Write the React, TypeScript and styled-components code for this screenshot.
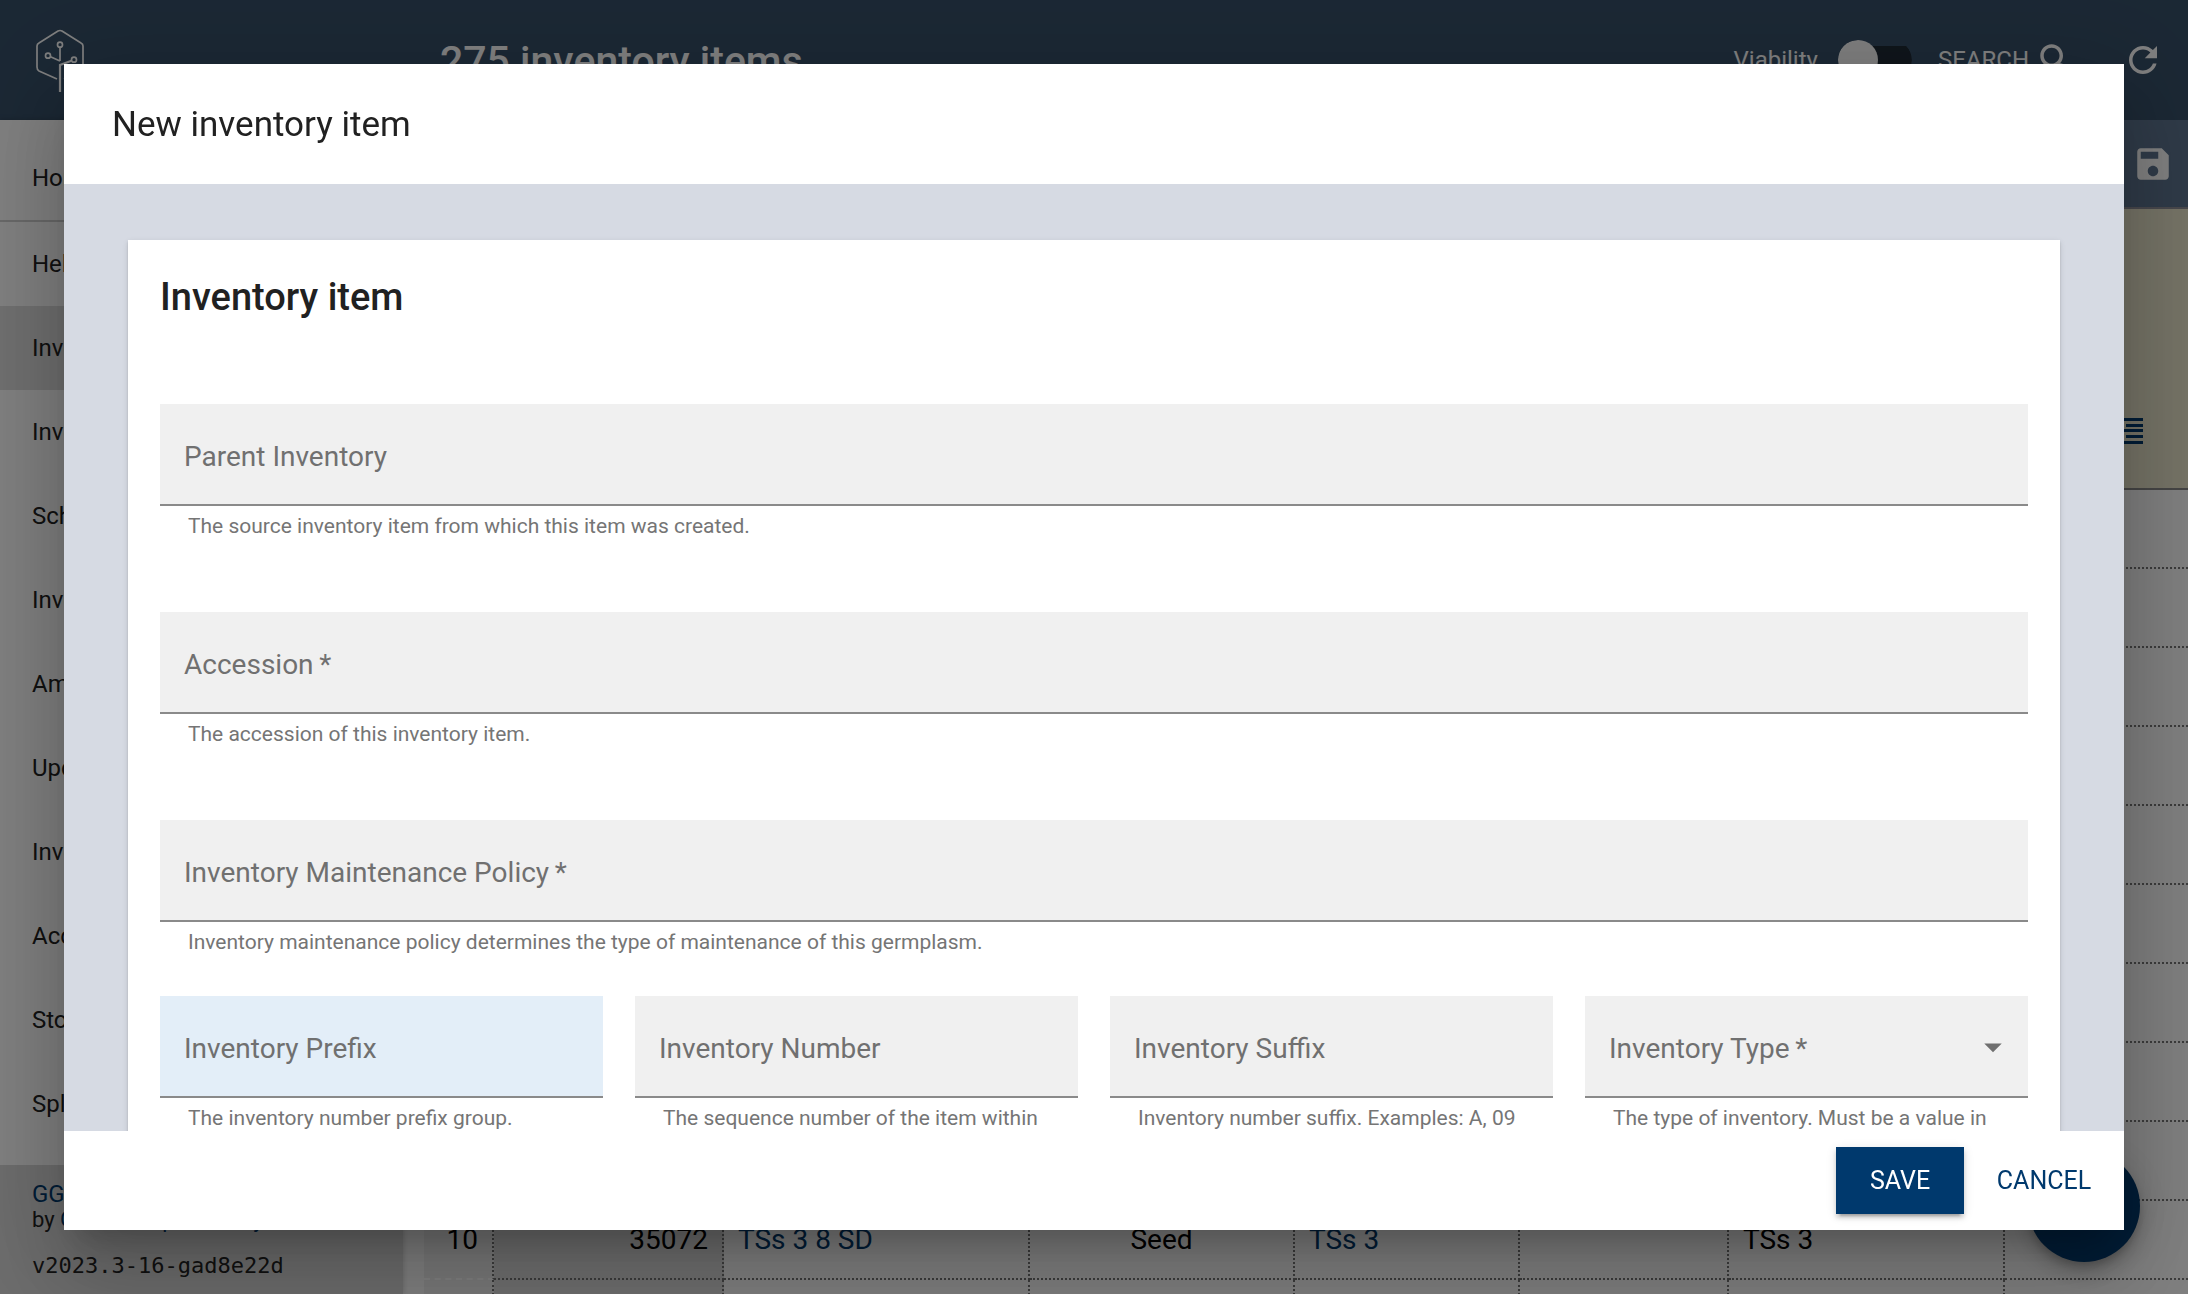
import React from 'react';
import styled, { createGlobalStyle } from 'styled-components';

const sans = `Roboto, "Liberation Sans", sans-serif`;
const navy = '#00396d';

const GlobalStyle = createGlobalStyle`
  *, *::before, *::after { box-sizing: border-box; }
  html, body, #root { height: 100%; }
  body {
    margin: 0;
    font-family: ${sans};
    font-size: 24px;
    color: #212121;
    background: #fff;
    overflow: hidden;
  }
  button, input, select { font-family: inherit; font-size: inherit; border-radius: 0; }
`;

const Page = styled.div`
  display: flex;
  flex-direction: column;
  height: 100vh;
  overflow: hidden;
`;

const AppBar = styled.header`
  display: flex;
  align-items: center;
  flex: none;
  height: 120px;
  padding: 0 24px 0 32px;
  background: #375069;
  color: #fff;
`;

const LogoSlot = styled.div`
  display: flex;
  width: 408px;
`;

const PageTitle = styled.h1`
  flex: 1;
  margin: 0;
  padding-top: 2px;
  font-size: 41px;
  font-weight: 500;
  line-height: 48px;
`;

const SwitchLabel = styled.label`
  display: flex;
  align-items: center;
  gap: 20px;
  margin-right: 26px;
`;

const Switch = styled.input`
  appearance: none;
  display: flex;
  align-items: center;
  width: 74px;
  height: 40px;
  margin: 0;
  border-radius: 20px;
  background: linear-gradient(#1f2a35, #1f2a35) 6px center / 68px 28px no-repeat;
  clip-path: inset(0 round 20px);

  &::before {
    content: '';
    width: 40px;
    height: 40px;
    border-radius: 50%;
    background: #fafafa;
  }
`;

const BarButton = styled.button`
  display: flex;
  align-items: center;
  gap: 6px;
  margin: 0;
  padding: 0;
  border: 0;
  background: none;
  color: inherit;
`;

const SearchButton = styled(BarButton)`
  margin-right: 45px;
`;

const Columns = styled.div`
  display: flex;
  flex: 1;
  min-height: 0;
`;

const Sidebar = styled.nav`
  display: flex;
  flex-direction: column;
  flex: none;
  width: 403px;
  background: #fff;
  box-shadow: 0 0 6px rgba(0, 0, 0, 0.2);
`;

const MenuItem = styled.a<{ $selected?: boolean }>`
  display: flex;
  align-items: center;
  flex: none;
  height: 84px;
  padding: 0 32px;
  color: inherit;
  text-decoration: none;
  background: ${(p) => (p.$selected ? '#dedede' : 'transparent')};
`;

const MenuTop = styled.div`
  padding-top: 16px;
  border-bottom: 2px solid #d0d0d0;
`;

const SidebarFooter = styled.footer`
  display: flex;
  flex-direction: column;
  flex: none;
  height: 129px;
  margin-top: auto;
  padding: 16px 32px;
  font-size: 22px;
  line-height: 26px;
  background: #d8d8d8;

  a { color: ${navy}; text-decoration: none; }
`;

const ProductLink = styled.a`
  font-size: 24px;
`;

const Version = styled.span`
  margin-top: 20px;
  font-family: "DejaVu Sans Mono", monospace;
  font-size: 22px;
`;

const Main = styled.main`
  flex: 1;
  min-width: 0;
  overflow: hidden;
`;

const Toolbar = styled.div`
  display: flex;
  align-items: center;
  justify-content: flex-end;
  height: 89px;
  padding-right: 14px;
  border-bottom: 2px solid #8f8f98;
  background: #5e7590;
  color: #fff;
`;

const TableWrap = styled.div`
  padding-left: 21px;
`;

const Table = styled.table`
  width: 100%;
  table-layout: fixed;
  border-collapse: separate;
  border-spacing: 0;
  font-size: 28px;
  color: #000;
`;

const HeadCell = styled.th`
  height: 281px;
  padding: 0 16px;
  border-bottom: 2px solid #8a8a8a;
  background: #eae6cc;
  text-align: right;
`;

const HeadButton = styled(BarButton)`
  display: inline-flex;
  margin: 172px 29px 0 0;
  color: ${navy};
`;

type Align = 'left' | 'center' | 'right';

const Cell = styled.td<{ $align?: Align; $bg?: string; $index?: boolean }>`
  height: 79px;
  padding: 0 14px;
  border-right: 2px dotted #777;
  border-bottom: 2px ${(p) => (p.$index ? 'dashed #fff' : 'dotted #777')};
  background: ${(p) => p.$bg || '#fff'};
  text-align: ${(p) => p.$align || 'left'};
  white-space: nowrap;

  &:last-child { border-right: 0; }

  a { color: ${navy}; text-decoration: none; }
`;

const Fab = styled.button`
  position: fixed;
  right: 48px;
  bottom: 32px;
  width: 112px;
  height: 112px;
  border: 0;
  border-radius: 50%;
  background: ${navy};
  color: #fff;
  box-shadow: 0 6px 10px -2px rgba(0, 0, 0, 0.2), 0 12px 20px rgba(0, 0, 0, 0.14),
    0 2px 36px rgba(0, 0, 0, 0.12);
`;

const Backdrop = styled.div`
  position: fixed;
  inset: 0;
  display: flex;
  padding: 64px;
  background: rgba(0, 0, 0, 0.5);
`;

const Dialog = styled.section`
  display: flex;
  flex-direction: column;
  flex: 1;
  min-width: 0;
  background: #fff;
  box-shadow: 0 22px 30px -14px rgba(0, 0, 0, 0.2), 0 48px 76px 6px rgba(0, 0, 0, 0.14),
    0 18px 92px 16px rgba(0, 0, 0, 0.12);
`;

const DialogTitle = styled.h2`
  display: flex;
  align-items: center;
  flex: none;
  height: 120px;
  margin: 0;
  padding: 0 48px;
  font-size: 35px;
  font-weight: 400;
`;

const DialogBody = styled.div`
  flex: 1;
  min-height: 0;
  padding: 56px 64px;
  overflow-y: auto;
  scrollbar-width: none;
  background: #d6dae3;
`;

const Card = styled.form`
  display: flex;
  flex-direction: column;
  gap: 38px;
  padding: 32px;
  background: #fff;
  box-shadow: 0 4px 2px -2px rgba(0, 0, 0, 0.2), 0 2px 2px rgba(0, 0, 0, 0.14),
    0 2px 6px rgba(0, 0, 0, 0.12);
`;

const CardTitle = styled.h3`
  margin: 0 0 12px;
  font-size: 38px;
  font-weight: 500;
  line-height: 50px;
`;

const FieldRow = styled.div`
  display: grid;
  grid-template-columns: repeat(4, 1fr);
  gap: 32px;
`;

const FieldBox = styled.div<{ $spaced?: boolean }>`
  min-width: 0;
  padding-top: ${(p) => (p.$spaced ? '32px' : '0')};
`;

const Control = styled.div`
  position: relative;
  display: flex;
`;

const controlStyle = `
  width: 100%;
  height: 102px;
  margin: 0;
  padding: 32px 24px 8px;
  border: 0;
  border-bottom: 2px solid #8a8a8a;
  outline: 0;
  font-size: 28px;
`;

const TextInput = styled.input<{ $tinted?: boolean }>`
  ${controlStyle}
  background: ${(p) => (p.$tinted ? '#e3eef8' : '#f0f0f0')};
`;

const SelectInput = styled.select`
  ${controlStyle}
  appearance: none;
  background: #f0f0f0;
`;

const FieldLabel = styled.label`
  position: absolute;
  top: 36px;
  left: 24px;
  color: #707070;
  font-size: 28px;
  line-height: 34px;
  pointer-events: none;
`;

const ArrowSlot = styled.span`
  position: absolute;
  top: 30px;
  right: 14px;
  display: flex;
  color: #6f6f6f;
  pointer-events: none;
`;

const Helper = styled.p`
  margin: 4px 28px 0;
  color: #757575;
  font-size: 21px;
  line-height: 32px;
`;

const Actions = styled.footer`
  display: flex;
  align-items: center;
  justify-content: flex-end;
  gap: 16px;
  flex: none;
  padding: 16px;
`;

const ActionButton = styled.button<{ $primary?: boolean }>`
  min-width: 128px;
  height: 67px;
  padding: 0 16px;
  border: 0;
  background: ${(p) => (p.$primary ? navy : 'transparent')};
  color: ${(p) => (p.$primary ? '#fff' : navy)};
  font-size: 25px;
  box-shadow: ${(p) =>
    p.$primary
      ? '0 6px 2px -4px rgba(0,0,0,.2), 0 4px 4px rgba(0,0,0,.14), 0 2px 10px rgba(0,0,0,.12)'
      : 'none'};
`;

const Icon = ({ d }: { d: string }) => (
  <svg width="42" height="42" viewBox="0 0 24 24" fill="currentColor" aria-hidden="true">
    <path d={d} />
  </svg>
);

const icons = {
  search:
    'M15.5 14h-.79l-.28-.27C15.41 12.59 16 11.11 16 9.5 16 5.91 13.09 3 9.5 3S3 5.91 3 9.5 5.91 16 9.5 16c1.61 0 3.09-.59 4.23-1.57l.27.28v.79l5 4.99L20.49 19l-4.99-5zm-6 0C7.01 14 5 11.99 5 9.5S7.01 5 9.5 5 14 7.01 14 9.5 11.99 14 9.5 14z',
  refresh:
    'M17.65 6.35C16.2 4.9 14.21 4 12 4c-4.42 0-7.99 3.58-7.99 8s3.57 8 7.99 8c3.73 0 6.84-2.55 7.73-6h-2.08c-.82 2.33-3.04 4-5.65 4-3.31 0-6-2.69-6-6s2.69-6 6-6c1.66 0 3.14.69 4.22 1.78L13 11h7V4l-2.35 2.35z',
  save:
    'M17 3H5c-1.11 0-2 .9-2 2v14c0 1.1.89 2 2 2h14c1.1 0 2-.9 2-2V7l-4-4zm-5 16c-1.66 0-3-1.34-3-3s1.34-3 3-3 3 1.34 3 3-1.34 3-3 3zm3-10H5V5h10v4z',
  arrow: 'M7 10l5 5 5-5z',
};

const Logo = () => (
  <svg width="56" height="66" viewBox="32 26 56 66" fill="none" stroke="#fff" strokeWidth="1.7" aria-hidden="true">
    <path d="M57 78 L39 70 Q37 69 37 66 V45 Q37 43 39 42 L58 30 Q60 29 62 30 L81 42 Q83 43 83 45 V66 Q83 69 81 70 L64 78" />
    <path d="M60 60 V46.5 M60 60 L50.5 55.7" />
    <path d="M60 91 V64 L71.5 59.7" strokeWidth="2.2" />
    <circle cx="60" cy="43.7" r="2.5" />
    <circle cx="48" cy="54.7" r="2.5" />
    <circle cx="74" cy="58.7" r="2.5" />
  </svg>
);

const LinesIcon = () => (
  <svg width="36" height="26" viewBox="0 0 36 26" fill="currentColor" aria-hidden="true">
    <rect x="0" y="0" width="36" height="3" />
    <rect x="19" y="6" width="17" height="3" />
    <rect x="0" y="11" width="36" height="3" />
    <rect x="19" y="17" width="17" height="3" />
    <rect x="0" y="23" width="36" height="3" />
  </svg>
);

const menu = [
  'Help',
  'Inventory',
  'Inventory groups',
  'Schedule',
  'Inventory actions',
  'Amounts',
  'Updates',
  'Inventory viability',
  'Accessions',
  'Storage',
  'Split inventory',
];

const rows = Array.from({ length: 11 }, (_, i) => ({
  number: i + 1,
  id: 35063 + i,
  name: `TSs 3 ${i - 1} SD`,
}));

const widths = [70, 230, 306, 265, 225, 209, 276];

const lookups = [
  { id: 'parent', label: 'Parent Inventory', help: 'The source inventory item from which this item was created.' },
  { id: 'accession', label: 'Accession', required: true, help: 'The accession of this inventory item.' },
  {
    id: 'policy',
    label: 'Inventory Maintenance Policy',
    required: true,
    help: 'Inventory maintenance policy determines the type of maintenance of this germplasm.',
  },
];

const numbers = [
  { id: 'prefix', label: 'Inventory Prefix', tinted: true, help: 'The inventory number prefix group.' },
  { id: 'number', label: 'Inventory Number', help: 'The sequence number of the item within the inventory prefix group.' },
  { id: 'suffix', label: 'Inventory Suffix', help: 'Inventory number suffix. Examples: A, 09 or SD.' },
];

type FieldProps = {
  id: string;
  label: string;
  help: string;
  required?: boolean;
  tinted?: boolean;
  spaced?: boolean;
};

const Field = ({ id, label, help, required, tinted, spaced }: FieldProps) => (
  <FieldBox $spaced={spaced}>
    <Control>
      <TextInput id={id} type="text" $tinted={tinted} aria-describedby={`${id}-help`} />
      <FieldLabel htmlFor={id}>
        {label}
        {required && '\u2009*'}
      </FieldLabel>
    </Control>
    <Helper id={`${id}-help`}>{help}</Helper>
  </FieldBox>
);

export default function App() {
  return (
    <>
      <GlobalStyle />
      <Page>
        <AppBar>
          <LogoSlot>
            <Logo />
          </LogoSlot>
          <PageTitle>275 inventory items</PageTitle>
          <SwitchLabel>
            Viability
            <Switch type="checkbox" role="switch" />
          </SwitchLabel>
          <SearchButton type="button">
            SEARCH
            <Icon d={icons.search} />
          </SearchButton>
          <BarButton type="button" aria-label="Refresh">
            <Icon d={icons.refresh} />
          </BarButton>
        </AppBar>
        <Columns>
          <Sidebar>
            <MenuTop>
              <MenuItem href="#home">Home</MenuItem>
            </MenuTop>
            {menu.map((item) => (
              <MenuItem key={item} href="#menu" $selected={item === 'Inventory'}>
                {item}
              </MenuItem>
            ))}
            <SidebarFooter>
              <ProductLink href="#ggce">GGCE</ProductLink>
              <span>
                by <a href="#crop">Global Crop Diversity</a>
              </span>
              <Version>v2023.3-16-gad8e22d</Version>
            </SidebarFooter>
          </Sidebar>
          <Main>
            <Toolbar>
              <BarButton type="button" aria-label="Save table">
                <Icon d={icons.save} />
              </BarButton>
            </Toolbar>
            <TableWrap>
              <Table>
                <colgroup>
                  {widths.map((w, i) => (
                    <col key={i} width={w} />
                  ))}
                  <col />
                </colgroup>
                <thead>
                  <tr>
                    <HeadCell colSpan={8}>
                      <HeadButton type="button" aria-label="Columns">
                        <LinesIcon />
                      </HeadButton>
                    </HeadCell>
                  </tr>
                </thead>
                <tbody>
                  {rows.map((row) => (
                    <tr key={row.number}>
                      <Cell $align="right" $bg="#f2f2f2" $index>
                        {row.number}
                      </Cell>
                      <Cell $align="right" $bg="#dedede">
                        {row.id}
                      </Cell>
                      <Cell>
                        <a href="#inventory">{row.name}</a>
                      </Cell>
                      <Cell $align="center">Seed</Cell>
                      <Cell>
                        <a href="#accession">TSs 3</a>
                      </Cell>
                      <Cell />
                      <Cell>TSs 3</Cell>
                      <Cell />
                    </tr>
                  ))}
                </tbody>
              </Table>
            </TableWrap>
          </Main>
        </Columns>
        <Fab type="button" aria-label="Add" />
      </Page>

      <Backdrop>
        <Dialog role="dialog" aria-modal="true" aria-labelledby="dialog-title">
          <DialogTitle id="dialog-title">New inventory item</DialogTitle>
          <DialogBody>
            <Card id="inventory-form">
              <CardTitle>Inventory item</CardTitle>
              {lookups.map((f) => (
                <Field key={f.id} {...f} spaced />
              ))}
              <FieldRow>
                {numbers.map((f) => (
                  <Field key={f.id} {...f} />
                ))}
                <FieldBox>
                  <Control>
                    <SelectInput id="type" defaultValue="" aria-describedby="type-help">
                      <option value="" />
                    </SelectInput>
                    <FieldLabel htmlFor="type">Inventory Type{'\u2009*'}</FieldLabel>
                    <ArrowSlot>
                      <Icon d={icons.arrow} />
                    </ArrowSlot>
                  </Control>
                  <Helper id="type-help">
                    The type of inventory. Must be a value in the code group.
                  </Helper>
                </FieldBox>
              </FieldRow>
            </Card>
          </DialogBody>
          <Actions>
            <ActionButton type="submit" form="inventory-form" $primary>
              SAVE
            </ActionButton>
            <ActionButton type="button">CANCEL</ActionButton>
          </Actions>
        </Dialog>
      </Backdrop>
    </>
  );
}
